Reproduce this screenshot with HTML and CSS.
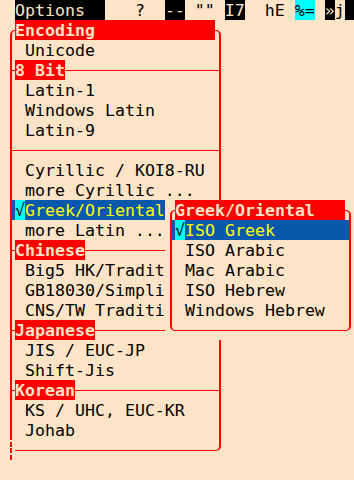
FILE: index.html
```html
<!DOCTYPE html>
<html>
<head>
<meta charset="utf-8">
<link rel="stylesheet" href="styles.css">
</head>
<body>
<div class="screen">
  <div class="status"> <span class="inv">Options  </span>   ?  <span class="inv">--</span> "" <span class="inv">I7</span>  hE <span class="cy">%=</span> <span class="inv">»</span>j<span class="inv"> </span></div>
</div>

<div class="menu">
  <div class="r"><div class="l tl"><i></i></div><div class="m title">Encoding</div><div class="rt tr"><i></i></div></div>
  <div class="r"><div class="l"></div><div class="m it">Unicode</div><div class="rt"></div></div>
  <div class="r"><div class="l j"></div><div class="m"><span class="lab">8 Bit</span><span class="hl"></span></div><div class="rt j"></div></div>
  <div class="r"><div class="l"></div><div class="m it">Latin-1</div><div class="rt"></div></div>
  <div class="r"><div class="l"></div><div class="m it">Windows Latin</div><div class="rt"></div></div>
  <div class="r"><div class="l"></div><div class="m it">Latin-9</div><div class="rt"></div></div>
  <div class="r"><div class="l j"></div><div class="m"><span class="hl"></span></div><div class="rt j"></div></div>
  <div class="r"><div class="l"></div><div class="m it">Cyrillic / KOI8-RU</div><div class="rt"></div></div>
  <div class="r"><div class="l"></div><div class="m it">more Cyrillic ...</div><div class="rt"></div></div>
  <div class="r"><div class="l sel"></div><div class="m sel"><span class="chk">√</span>Greek/Oriental</div><div class="rt sel"></div></div>
  <div class="r"><div class="l"></div><div class="m it">more Latin ...</div><div class="rt"></div></div>
  <div class="r"><div class="l j"></div><div class="m"><span class="lab">Chinese</span><span class="hl"></span></div><div class="rt j"></div></div>
  <div class="r"><div class="l"></div><div class="m it">Big5 HK/Tradit</div><div class="rt"></div></div>
  <div class="r"><div class="l"></div><div class="m it">GB18030/Simpli</div><div class="rt"></div></div>
  <div class="r"><div class="l"></div><div class="m it">CNS/TW Traditi</div><div class="rt"></div></div>
  <div class="r"><div class="l j"></div><div class="m"><span class="lab">Japanese</span><span class="hl"></span></div><div class="rt j"></div></div>
  <div class="r"><div class="l"></div><div class="m it">JIS / EUC-JP</div><div class="rt"></div></div>
  <div class="r"><div class="l"></div><div class="m it">Shift-Jis</div><div class="rt"></div></div>
  <div class="r"><div class="l j"></div><div class="m"><span class="lab">Korean</span><span class="hl"></span></div><div class="rt j"></div></div>
  <div class="r"><div class="l"></div><div class="m it">KS / UHC, EUC-KR</div><div class="rt"></div></div>
  <div class="r"><div class="l"></div><div class="m it">Johab</div><div class="rt"></div></div>
  <div class="r"><div class="l dash"></div><div class="m"><span class="hl"></span></div><div class="rt br"><i></i></div></div>
</div>

<div class="menu sub">
  <div class="r"><div class="l tl"><i></i></div><div class="m title">Greek/Oriental</div><div class="rt tr"><i></i></div></div>
  <div class="r"><div class="l sel"></div><div class="m sel"><span class="chk">√</span>ISO Greek</div><div class="rt sel"></div></div>
  <div class="r"><div class="l"></div><div class="m it">ISO Arabic</div><div class="rt"></div></div>
  <div class="r"><div class="l"></div><div class="m it">Mac Arabic</div><div class="rt"></div></div>
  <div class="r"><div class="l"></div><div class="m it">ISO Hebrew</div><div class="rt"></div></div>
  <div class="r"><div class="l"></div><div class="m it">Windows Hebrew</div><div class="rt"></div></div>
  <div class="r"><div class="l bl"><i></i></div><div class="m"><span class="hl"></span></div><div class="rt br"><i></i></div></div>
</div>
</body>
</html>
```

FILE: styles.css
```css
* { box-sizing: border-box; margin: 0; padding: 0; }
html, body { width: 354px; height: 480px; overflow: hidden; }
body {
  position: relative;
  background: #fde4c6;
  color: #000;
  font-family: "DejaVu Sans Mono", monospace;
  font-size: 16.6px;
  line-height: 20px;
}
.screen { padding-left: 5px; }
.status { height: 20px; line-height: 22px; white-space: pre; overflow: hidden; }
.status span { display: inline-block; height: 20px; vertical-align: top; line-height: 22px; }
.inv { background: #000; color: #fde4c6; }
.cy { background: #00ffff; }

.menu {
  position: absolute;
  left: 5px;
  top: 20px;
  width: 220px;
  background: #fde4c6;
}
.sub { left: 165px; top: 200px; width: 190px; }

.r { display: flex; height: 20px; white-space: pre; }
.l, .rt { width: 10px; flex: none; }
.m { flex: 1; display: flex; overflow: hidden; min-width: 0; line-height: 22px; }
.it { padding-left: 10px; }

.l { background: linear-gradient(#f00, #f00) 5px 0 / 2px 100% no-repeat; }
.rt { background: linear-gradient(#f00, #f00) 4px 0 / 2px 100% no-repeat; }
.l.j {
  background:
    linear-gradient(#f00, #f00) 5px 0 / 2px 100% no-repeat,
    linear-gradient(#f00, #f00) 5px 10px / 5px 1px no-repeat;
}
.rt.j {
  background:
    linear-gradient(#f00, #f00) 4px 0 / 2px 100% no-repeat,
    linear-gradient(#f00, #f00) 0 10px / 5px 1px no-repeat;
}
.l.dash {
  background: linear-gradient(to bottom,
    transparent 0 2px, #f00 2px 7px, transparent 7px 8px,
    #f00 8px 13px, transparent 13px 15px, #f00 15px 20px) 5px 0 / 2px 100% no-repeat;
}
.hl { flex: 1; background: linear-gradient(#f00, #f00) 0 10px / 100% 1px no-repeat; }

.l i, .rt i { display: block; }
.tl, .tr, .bl, .br { background: none; }
.tl i {
  margin: 10px 0 0 5px; height: 10px;
  border-left: 2px solid #f00; border-top: 1px solid #f00;
  border-top-left-radius: 5px;
}
.tr i {
  margin-top: 10px; width: 6px; height: 10px;
  border-right: 2px solid #f00; border-top: 1px solid #f00;
  border-top-right-radius: 5px;
}
.bl i {
  margin-left: 5px; height: 11px;
  border-left: 2px solid #f00; border-bottom: 1px solid #f00;
  border-bottom-left-radius: 5px;
}
.br i {
  width: 6px; height: 11px;
  border-right: 2px solid #f00; border-bottom: 1px solid #f00;
  border-bottom-right-radius: 5px;
}

.title { background: #f00; color: #fde4c6; font-weight: bold; }
.lab { background: #f00; color: #fde4c6; font-weight: bold; }

.m.sel { background: #0a58ad; color: #ffff00; }
.chk { background: #00ffff; color: #000; }
.l.sel {
  background:
    linear-gradient(#f00, #f00) 5px 0 / 2px 100% no-repeat,
    linear-gradient(#0a58ad, #0a58ad) 7px 0 / 3px 100% no-repeat;
}
.rt.sel {
  background:
    linear-gradient(#f00, #f00) 4px 0 / 2px 100% no-repeat,
    linear-gradient(#0a58ad, #0a58ad) 0 0 / 4px 100% no-repeat;
}
```
